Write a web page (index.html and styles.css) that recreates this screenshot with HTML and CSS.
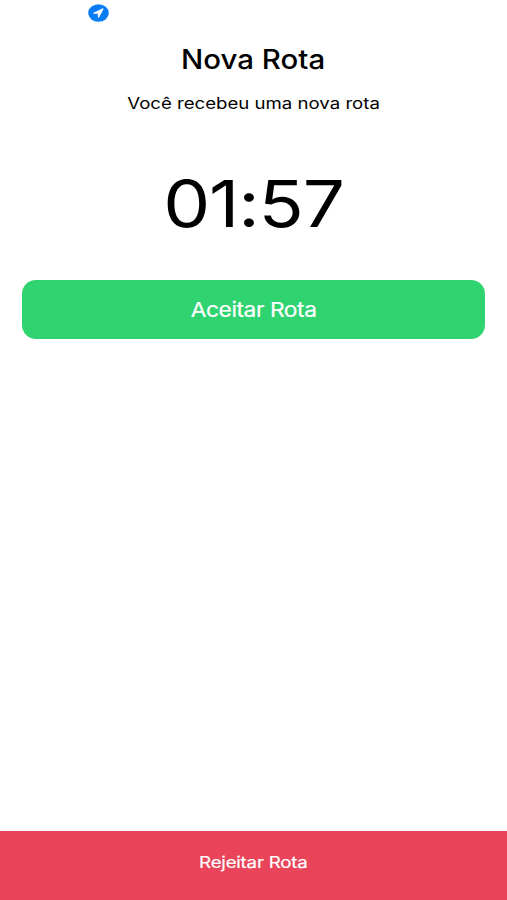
FILE: index.html
```html
<!DOCTYPE html>
<html lang="pt-BR">
<head>
    <meta charset="UTF-8">
    <meta name="viewport" content="width=device-width, initial-scale=1.0">
    <title>Nova Rota</title>
    <link rel="stylesheet" href="styles.css">
</head>
<body>
    <div class="status-bar">
        <svg class="location" viewBox="0 0 20 18" preserveAspectRatio="none">
            <ellipse cx="10" cy="9" rx="9.8" ry="8.7" fill="#0a7cf5"/>
            <path d="M14.2 4.2 L5.2 8.7 Q4.6 9.5 5.5 9.7 L9.3 9.7 L9.5 13.4 Q9.9 14.2 10.5 13.5 L14.9 4.8 Z" fill="#fff"/>
        </svg>
    </div>

    <main>
        <h1><span>Nova Rota</span></h1>
        <p class="message"><span>Você recebeu uma nova rota</span></p>
        <div class="timer"><span>01:57</span></div>
        <button class="accept"><span>Aceitar Rota</span></button>
    </main>

    <button class="reject"><span>Rejeitar Rota</span></button>
</body>
</html>
```

FILE: styles.css
```css
* {
    box-sizing: border-box;
}
body {
    font-family: Inter, "Liberation Sans", sans-serif;
    margin: 0;
    height: 900px;
    display: flex;
    flex-direction: column;
    background-color: #fff;
    color: #000;
    text-align: center;
}
span {
    display: inline-block;
}
.status-bar {
    height: 26px;
    padding: 4px 0 0 88px;
    text-align: left;
}
.location {
    display: block;
    width: 21px;
    height: 18px;
}
main {
    flex: 1;
    padding: 0 22px;
}
h1 {
    margin: 17px 0 0;
    font-size: 27px;
    line-height: 34px;
    font-weight: 500;
}
h1 span {
    transform: scaleX(1.09);
}
.message {
    margin: 15px 0 0;
    font-size: 16px;
    line-height: 22px;
}
.message span {
    transform: scaleX(1.163);
}
.timer {
    margin-top: 50px;
    font-size: 64px;
    line-height: 80px;
}
.timer span {
    letter-spacing: -1px;
    transform: scaleX(1.165);
}
button {
    display: block;
    width: 100%;
    border: 0;
    font-family: inherit;
    color: #fff;
}
.accept {
    height: 59px;
    margin-top: 36px;
    border-radius: 14px;
    background-color: #2fd36f;
    font-size: 20.5px;
}
.accept span {
    letter-spacing: -0.4px;
    -webkit-text-stroke: 0.2px #fff;
    transform: scaleX(1.11);
}
.reject {
    height: 69px;
    padding-bottom: 8px;
    background-color: #e9445a;
    font-size: 16px;
}
.reject span {
    letter-spacing: -0.2px;
    -webkit-text-stroke: 0.2px #fff;
    transform: scaleX(1.17);
}
```
